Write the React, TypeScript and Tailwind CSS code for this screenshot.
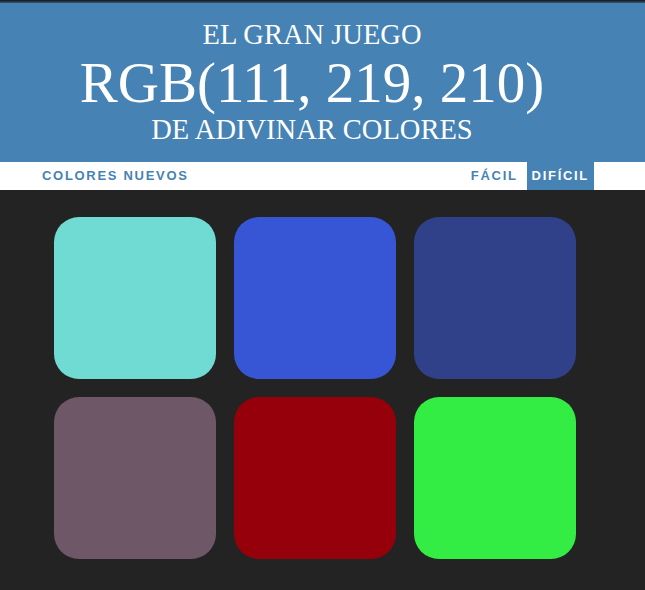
const squares = ['#6fdbd2', '#3656d6', '#30418a', '#6e5767', '#96000a', '#33ed44']

export default function App() {
  return (
    <div className="min-h-screen bg-[#232323]">
      <div className="h-[3px] bg-linear-to-b from-[#161616] to-[#35597a]" />
      <header className="bg-[#4682b4] pb-[18px] pr-[21px] pt-[17px] text-center text-white [font-family:'Liberation_Serif',serif]">
        <div className="text-[28.5px] leading-[29px]">EL GRAN JUEGO</div>
        <div className="mt-[5px] text-[57px] leading-[57px]">RGB(111, 219, 210)</div>
        <div className="mt-[4px] text-[28.5px] leading-[29px]">DE ADIVINAR COLORES</div>
      </header>
      <nav className="flex h-[28px] items-stretch justify-between bg-white pl-[37px] pr-[51px] text-[13px] font-bold uppercase leading-[28px] tracking-[1.7px] text-[#4682b4] [font-family:'Liberation_Sans',sans-serif]">
        <button className="px-[5px] font-bold uppercase">Colores nuevos</button>
        <div className="flex items-stretch gap-[4px]">
          <button className="px-[5px] font-bold uppercase">Fácil</button>
          <button className="bg-[#4682b4] px-[5px] font-bold uppercase text-white">Difícil</button>
        </div>
      </nav>
      <main className="grid grid-cols-[162px_162px_162px] gap-[18px] pl-[54px] pt-[27px]">
        {squares.map((c) => (
          <div key={c} className="h-[162px] w-[162px] rounded-[25px]" style={{ backgroundColor: c }} />
        ))}
      </main>
    </div>
  )
}
